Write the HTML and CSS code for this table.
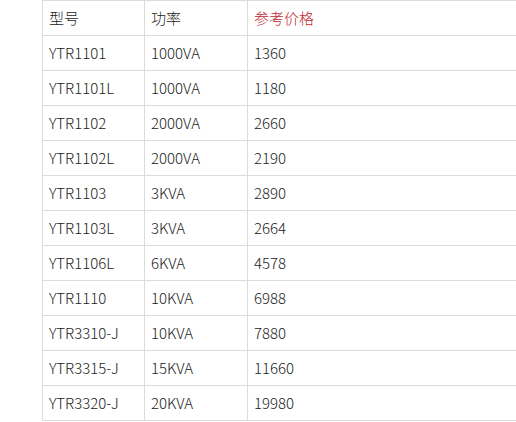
FILE: index.html
```html
<!DOCTYPE html>
<html lang="zh-CN">
<head>
<meta charset="utf-8">
<title>价格表</title>
<link rel="stylesheet" href="styles.css">
</head>
<body>
<table class="price-table">
  <tbody>
    <tr><td class="c1">型号</td><td class="c2">功率</td><td class="c3 red">参考价格</td></tr>
    <tr><td>YTR1101</td><td>1000VA</td><td>1360</td></tr>
    <tr><td>YTR1101L</td><td>1000VA</td><td>1180</td></tr>
    <tr><td>YTR1102</td><td>2000VA</td><td>2660</td></tr>
    <tr><td>YTR1102L</td><td>2000VA</td><td>2190</td></tr>
    <tr><td>YTR1103</td><td>3KVA</td><td>2890</td></tr>
    <tr><td>YTR1103L</td><td>3KVA</td><td>2664</td></tr>
    <tr><td>YTR1106L</td><td>6KVA</td><td>4578</td></tr>
    <tr><td>YTR1110</td><td>10KVA</td><td>6988</td></tr>
    <tr><td>YTR3310-J</td><td>10KVA</td><td>7880</td></tr>
    <tr><td>YTR3315-J</td><td>15KVA</td><td>11660</td></tr>
    <tr><td>YTR3320-J</td><td>20KVA</td><td>19980</td></tr>
  </tbody>
</table>
</body>
</html>
```

FILE: styles.css
```css
html, body {
  margin: 0;
  padding: 0;
  background: #fff;
  overflow: hidden;
}
body {
  font-family: "Noto Sans CJK SC", "Noto Sans", sans-serif;
  font-size: 15px;
  font-weight: 300;
  color: #222;
}
.price-table {
  border-collapse: collapse;
  margin-left: 42px;
  width: 640px;
  table-layout: fixed;
}
.price-table td {
  border: 1px solid #dcdcdc;
  height: 34px;
  padding: 0 6px;
  line-height: 20px;
  white-space: nowrap;
  vertical-align: middle;
}
.price-table .c1 { width: 89px; }
.price-table .c2 { width: 90px; }
.red { color: #c0272d; }
```
